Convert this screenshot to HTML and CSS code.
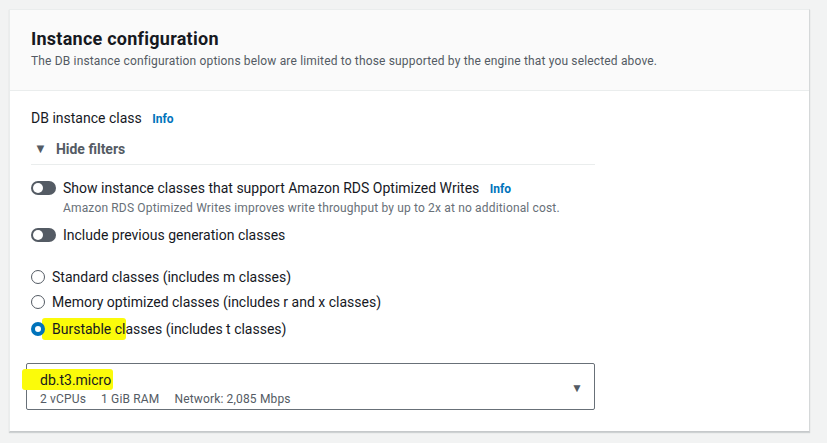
FILE: index.html
```html
<!DOCTYPE html>
<html lang="en">
<head>
<meta charset="utf-8">
<title>Instance configuration</title>
<link rel="stylesheet" href="styles.css">
</head>
<body>
<section class="card">
  <header class="card-header">
    <h2 class="title">Instance configuration</h2>
    <p class="subtitle">The DB instance configuration options below are limited to those supported by the engine that you selected above.</p>
  </header>
  <div class="card-body">
    <div class="field-label">DB instance class <a class="info">Info</a></div>
    <div class="filters-toggle"><span class="tri">&#9660;</span>Hide filters</div>
    <div class="toggle-row">
      <span class="toggle"><span class="knob"></span></span>
      <div class="toggle-text">
        <div class="toggle-label">Show instance classes that support Amazon RDS Optimized Writes <a class="info">Info</a></div>
        <div class="toggle-desc">Amazon RDS Optimized Writes improves write throughput by up to 2x at no additional cost.</div>
      </div>
    </div>
    <div class="toggle-row second">
      <span class="toggle"><span class="knob"></span></span>
      <div class="toggle-text">
        <div class="toggle-label">Include previous generation classes</div>
      </div>
    </div>
    <div class="radios">
      <label class="radio-row"><span class="radio"></span>Standard classes (includes m classes)</label>
      <label class="radio-row"><span class="radio"></span>Memory optimized classes (includes r and x classes)</label>
      <label class="radio-row"><span class="radio checked"></span><span class="hl hl-radio">Burstable cl</span>asses (includes t classes)</label>
    </div>
    <div class="select">
      <div class="select-main">
        <div class="select-value"><span class="hl hl-select">db.t3.micro</span></div>
        <div class="select-tags"><span>2 vCPUs</span><span>1 GiB RAM</span><span>Network: 2,085 Mbps</span></div>
      </div>
      <span class="caret">&#9660;</span>
    </div>
  </div>
</section>
</body>
</html>
```
FILE: styles.css
```css
* { box-sizing: border-box; }
html, body { margin: 0; }
body {
  background: #f2f3f3;
  font-family: Roboto, "Liberation Sans", Arial, sans-serif;
  color: #16191f;
  padding: 9px 17px 11px 9px;
  width: 827px;
  height: 443px;
  overflow: hidden;
}
.card {
  width: 801px;
  height: 423px;
  background: #fff;
  border: 1px solid #eaeded;
  border-bottom-color: #c6c9cb;
  border-right-color: #d5d8d9;
  box-shadow: 0 1px 1px rgba(0, 28, 36, 0.15);
}
.card-header {
  background: #fafafa;
  border-bottom: 1px solid #eaeded;
  padding: 18px 20px 0 21px;
  height: 81px;
}
.title {
  margin: 0 0 3px;
  font-size: 18px;
  line-height: 22px;
  font-weight: 700;
  letter-spacing: 0.25px;
  color: #16191f;
}
.subtitle {
  margin: 0;
  font-size: 12px;
  line-height: 16px;
  letter-spacing: 0.16px;
  color: #545b64;
}
.card-body {
  padding: 17px 20px 0 21px;
  display: flex;
  flex-direction: column;
}
.field-label {
  font-size: 14px;
  line-height: 20px;
}
.info {
  color: #0073bb;
  font-weight: 700;
  font-size: 12px;
  margin-left: 7px;
}
.filters-toggle {
  margin-top: 10px;
  width: 564px;
  font-size: 14px;
  line-height: 20px;
  font-weight: 700;
  color: #545b64;
  padding-bottom: 5px;
  border-bottom: 1px solid #eaeded;
  display: flex;
  align-items: center;
}
.tri {
  font-size: 13px;
  margin: 0 9px 0 3px;
  color: #545b64;
}
.toggle-row {
  margin-top: 13px;
  display: flex;
  align-items: flex-start;
}
.toggle-row.second { margin-top: 9px; }
.toggle {
  width: 25px;
  height: 14px;
  border-radius: 7px;
  background: #545b64;
  margin: 3px 0 0 0;
  position: relative;
  flex: none;
}
.knob {
  position: absolute;
  left: 2px;
  top: 2px;
  width: 10px;
  height: 10px;
  border-radius: 50%;
  background: #fff;
}
.toggle-text { margin-left: 7px; }
.toggle-label {
  font-size: 14px;
  line-height: 20px;
}
.toggle-desc {
  margin-top: 1px;
  font-size: 12px;
  line-height: 16px;
  letter-spacing: 0.16px;
  color: #687078;
}
.radios {
  margin-top: 22px;
  display: flex;
  flex-direction: column;
  gap: 5px;
}
.radio-row {
  display: flex;
  align-items: center;
  font-size: 14px;
  line-height: 20px;
}
.radio-row:nth-child(3) { margin-top: 1px; }
.radio {
  width: 14px;
  height: 14px;
  border-radius: 50%;
  border: 1.5px solid #545b64;
  background: #fff;
  margin-right: 7px;
  position: relative;
  z-index: 1;
  flex: none;
}
.radio.checked {
  border: 4px solid #0073bb;
}
.hl {
  background: #fbfb0a;
  border-radius: 3px;
}
.hl-radio {
  margin-left: -10px;
  padding: 1px 0 1px 10px;
}
.select {
  margin-top: 23px;
  margin-left: -5px;
  width: 569px;
  height: 47px;
  border: 1px solid #687078;
  border-radius: 2px;
  padding: 6px 11px 0 13px;
  display: flex;
  align-items: center;
}
.select-main { flex: 1; align-self: flex-start; }
.select-value {
  font-size: 14px;
  line-height: 20px;
}
.hl-select {
  margin-left: -18px;
  padding: 3px 2px 2px 18px;
}
.select-tags {
  margin-top: 1px;
  font-size: 12px;
  line-height: 16px;
  letter-spacing: 0.16px;
  color: #545b64;
  display: flex;
  gap: 15px;
}
.caret {
  font-size: 12px;
  color: #545b64;
  margin-top: -4px;
}
```
